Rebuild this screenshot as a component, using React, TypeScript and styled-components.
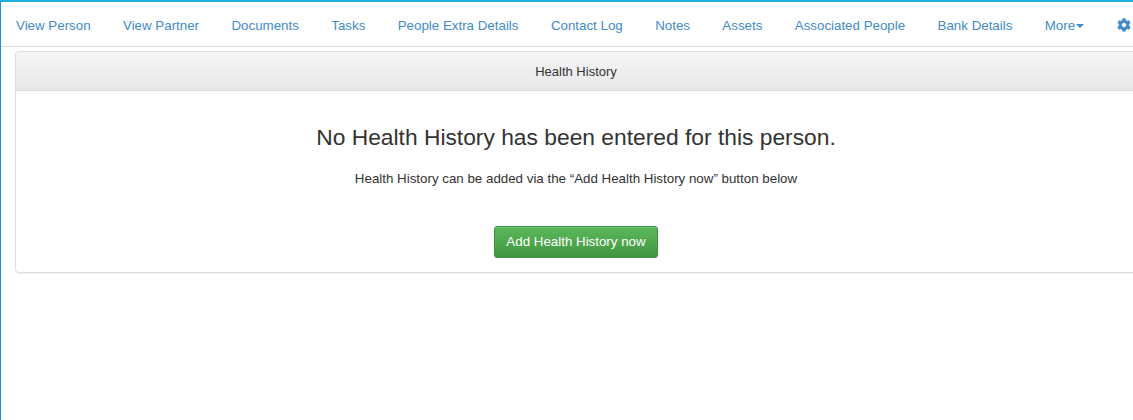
import React from "react";
import styled, { createGlobalStyle } from "styled-components";
import { FaCog } from "react-icons/fa";

const GlobalStyle = createGlobalStyle`
  html, body {
    margin: 0;
    padding: 0;
    height: 100%;
    background: #fff;
    overflow: hidden;
    font-family: "Liberation Sans", Arial, sans-serif;
    font-size: 13.33px;
    color: #333;
  }
  #root {
    height: 100%;
  }
`;

const Page = styled.div`
  position: relative;
  height: 420px;
  box-sizing: border-box;
  border-left: 1px solid #1c94e4;
  border-top: 2px solid #1fb0e0;
  overflow: hidden;
`;

const TopTab = styled.span<{ $left: number; $width: number; $color: string }>`
  position: absolute;
  top: -2px;
  left: ${(p) => p.$left}px;
  width: ${(p) => p.$width}px;
  height: 2px;
  background: ${(p) => p.$color};
`;

const Nav = styled.nav`
  display: flex;
  align-items: center;
  height: 45px;
  box-sizing: border-box;
  padding: 2px 0 0 15px;
  gap: 32.4px;
  border-bottom: 1px solid #ddd;
  white-space: nowrap;
`;

const NavLink = styled.a`
  display: inline-flex;
  align-items: center;
  color: #428bca;
  font-size: 13.33px;
  text-decoration: none;
`;

const Caret = styled.span`
  width: 0;
  height: 0;
  margin-left: 1px;
  margin-top: 2px;
  border-top: 4px solid #428bca;
  border-left: 4px solid transparent;
  border-right: 4px solid transparent;
`;

const Panel = styled.section`
  width: 1122px;
  margin: 4px 0 0 14px;
  box-sizing: border-box;
  background: #fff;
  border: 1px solid #ddd;
  border-radius: 4px;
  box-shadow: 0 1px 1px rgba(0, 0, 0, 0.05);
`;

const PanelHeading = styled.header`
  height: 39px;
  box-sizing: border-box;
  padding-top: 1px;
  display: flex;
  align-items: center;
  justify-content: center;
  background: linear-gradient(to bottom, #f5f5f5, #e8e8e8);
  border-bottom: 1px solid #ddd;
  border-radius: 3px 3px 0 0;
  font-size: 13px;
  color: #333;
`;

const PanelBody = styled.div`
  display: flex;
  flex-direction: column;
  align-items: center;
  height: 181px;
  box-sizing: border-box;
  padding-top: 33px;
`;

const Title = styled.h3`
  margin: 0;
  font-size: 22.8px;
  font-weight: 400;
  line-height: 26px;
  color: #333;
`;

const Message = styled.p`
  margin: 20px 0 0;
  font-size: 13.33px;
  line-height: 17px;
  color: #333;
`;

const AddButton = styled.button`
  margin-top: 39px;
  width: 164px;
  height: 32px;
  padding: 0 0 2px;
  box-sizing: border-box;
  font-family: inherit;
  font-size: 13.33px;
  color: #fff;
  background: linear-gradient(to bottom, #5cb85c, #419641);
  border: 1px solid #3e8f3e;
  border-radius: 3px;
  box-shadow: inset 0 1px 0 rgba(255, 255, 255, 0.15);
`;

const links = [
  "View Person",
  "View Partner",
  "Documents",
  "Tasks",
  "People Extra Details",
  "Contact Log",
  "Notes",
  "Assets",
  "Associated People",
  "Bank Details",
];

export default function App() {
  return (
    <>
      <GlobalStyle />
      <Page>
        <TopTab $left={781} $width={69} $color="#e8941a" />
        <TopTab $left={880} $width={44} $color="#d4d4d4" />
        <Nav>
          {links.map((l) => (
            <NavLink key={l}>{l}</NavLink>
          ))}
          <NavLink>
            More
            <Caret />
          </NavLink>
          <NavLink>
            <FaCog size={14} />
          </NavLink>
        </Nav>
        <Panel>
          <PanelHeading>Health History</PanelHeading>
          <PanelBody>
            <Title>No Health History has been entered for this person.</Title>
            <Message>Health History can be added via the “Add Health History now” button below</Message>
            <AddButton>Add Health History now</AddButton>
          </PanelBody>
        </Panel>
      </Page>
    </>
  );
}
